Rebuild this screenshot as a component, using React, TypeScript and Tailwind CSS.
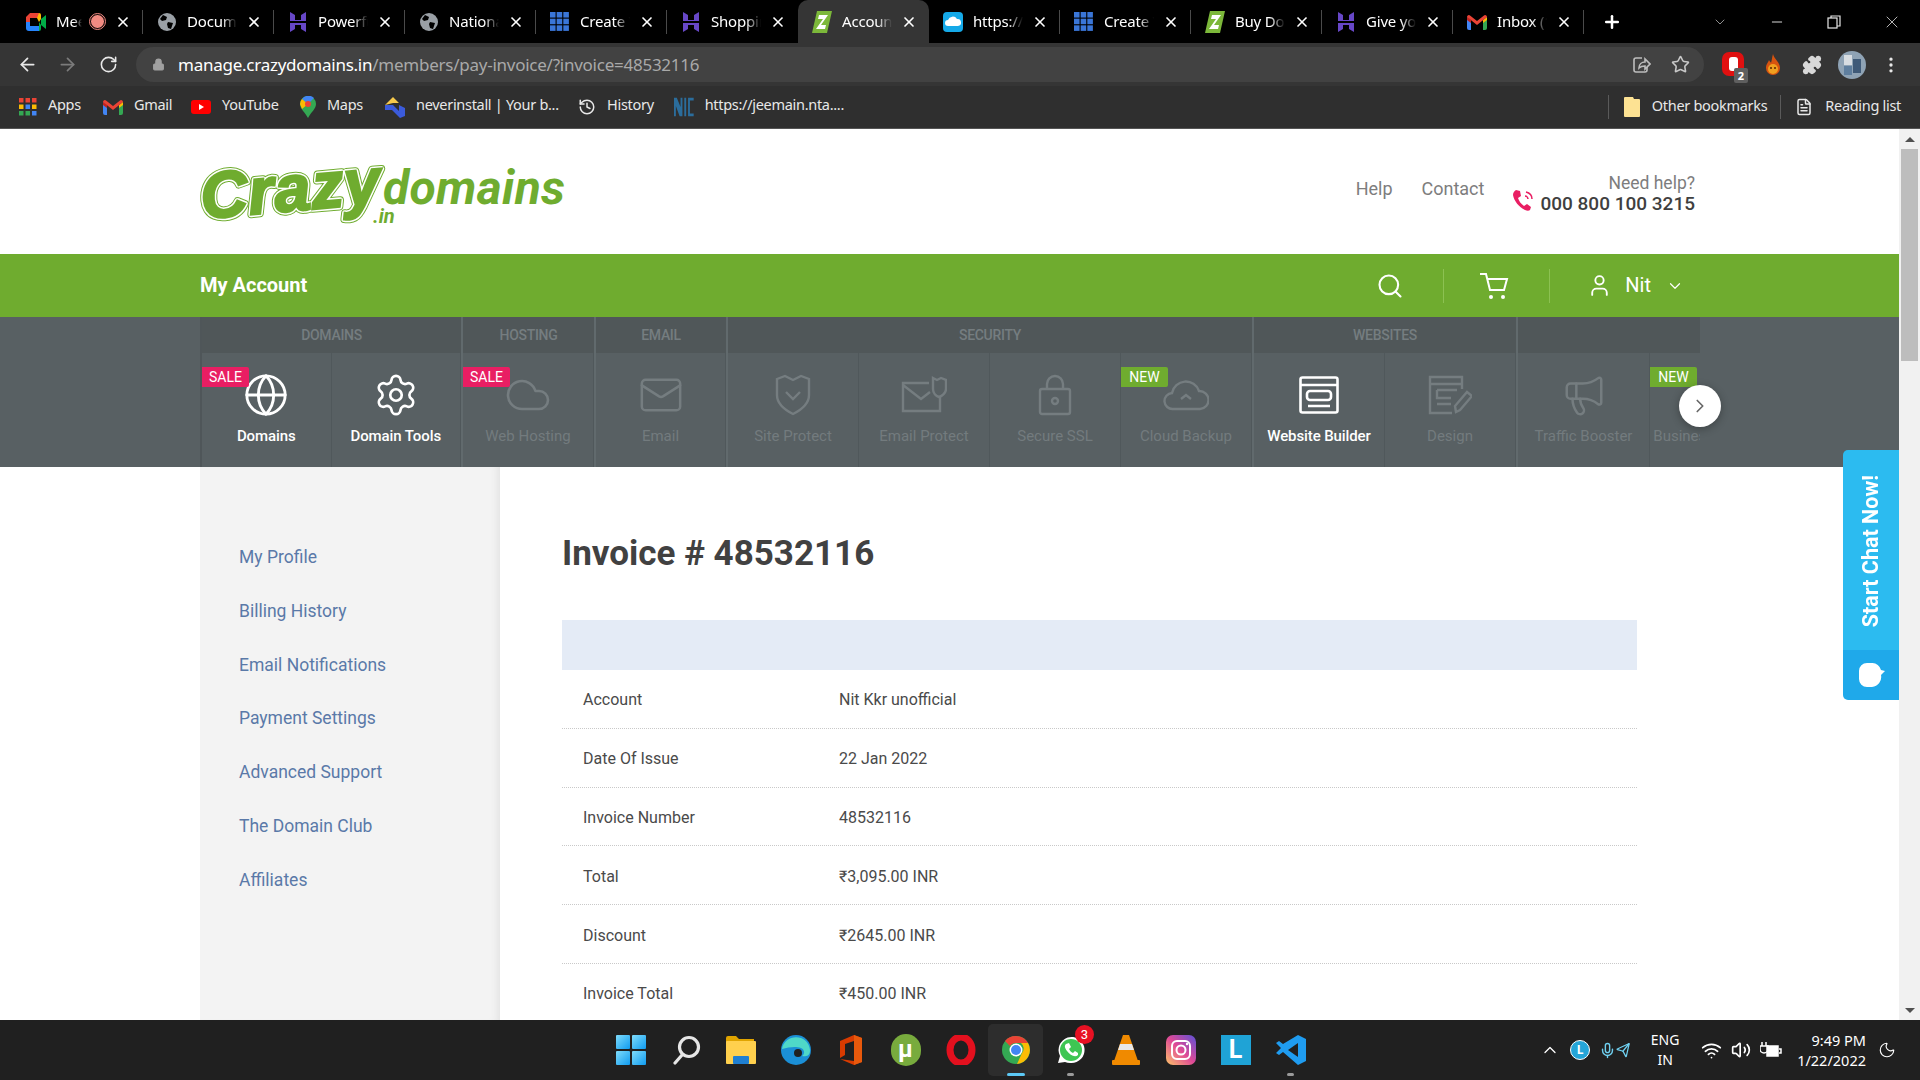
import React from 'react';
import {
  ArrowLeft, ArrowRight, RotateCw, Lock, Star, Puzzle, MoreVertical, X, Plus, ChevronDown, ChevronRight, ChevronUp,
  Minus, Search, User, Globe, Settings, Cloud, Mail, Megaphone, Wifi, Volume2, Moon, History, Mic, Send, FileText,
} from 'lucide-react';

const chromeFont = "font-['Noto_Sans','Open_Sans',sans-serif]";

const GlobeFav = () => (
  <svg width="20" height="20" viewBox="0 0 20 20">
    <circle cx="10" cy="10" r="9" fill="#9aa0a6" />
    <path d="M6 3l4 2-1 3-4 1-2-2zM11 10l5 1-2 6-3-1-1-4z" fill="#000" />
  </svg>
);
const HostFav = () => (
  <svg width="20" height="22" viewBox="0 0 20 22" fill="#6747c7">
    <path d="M2 1l5 3v5l6 0V4l5-3v9H2zM2 12h16v9l-5-3v-4H7v4l-5 3z" />
  </svg>
);
const GridFav = () => (
  <svg width="20" height="20" viewBox="0 0 18 18" fill="#3a76d8">
    {[0, 6, 12].map((x) => [0, 6, 12].map((y) => <rect key={`${x}${y}`} x={x} y={y} width="5" height="5" />))}
  </svg>
);
const CrazyFav = () => (
  <svg width="20" height="24" viewBox="0 0 20 24">
    <path d="M5 1h15l-5 22H0z" fill="#7cb83a" />
    <path d="M7 5h9l-7 10h5l-1 4H4l7-10H6z" fill="#fff" />
  </svg>
);
const CloudFav = () => (
  <svg width="20" height="20" viewBox="0 0 20 20">
    <rect width="20" height="20" rx="4" fill="#15a9e8" />
    <path d="M5 14a3 3 0 010-6 5 5 0 019-1 3.5 3.5 0 011 7z" fill="#fff" />
  </svg>
);
const GmailFav = () => (
  <svg width="20" height="16" viewBox="0 0 20 16">
    <path d="M0 3v11a2 2 0 002 2h2V7z" fill="#4285f4" />
    <path d="M20 3v11a2 2 0 01-2 2h-2V7z" fill="#34a853" />
    <path d="M0 3l4 3v3L0 6z" fill="#c5221f" />
    <path d="M16 6l4-3v3l-4 3z" fill="#fbbc04" />
    <path d="M0 3a2 2 0 013-1.6L10 7l7-5.6A2 2 0 0120 3l-10 8z" fill="#ea4335" />
  </svg>
);
const MeetFav = () => (
  <svg width="20" height="18" viewBox="0 0 20 18">
    <path d="M4 0h9v5H4v4H0V4z" fill="#ea4335" />
    <path d="M13 0a2 2 0 012 2v4l-2 3-2-4z" fill="#fbbc04" />
    <path d="M0 9h4v4h9v5H3a3 3 0 01-3-3z" fill="#2684fc" />
    <path d="M13 9l2 3v4a2 2 0 01-2 2z" fill="#00ac47" />
    <path d="M15 6l5-4v14l-5-4z" fill="#00ac47" />
  </svg>
);

const tabs = [
  { icon: <MeetFav />, title: 'Meet', rec: true },
  { icon: <GlobeFav />, title: 'Documents' },
  { icon: <HostFav />, title: 'Powerful' },
  { icon: <GlobeFav />, title: 'National' },
  { icon: <GridFav />, title: 'Create Your' },
  { icon: <HostFav />, title: 'Shopping' },
  { icon: <CrazyFav />, title: 'Account', active: true },
  { icon: <CloudFav />, title: 'https://app' },
  { icon: <GridFav />, title: 'Create Your' },
  { icon: <CrazyFav />, title: 'Buy Domain' },
  { icon: <HostFav />, title: 'Give your' },
  { icon: <GmailFav />, title: 'Inbox (1)' },
];

function TabStrip() {
  return (
    <div className="h-[43px] bg-black flex items-stretch pl-[12px] text-white">
      {tabs.map((t, i) => (
        <div
          key={i}
          className={`w-[131px] shrink-0 flex items-center pl-[14px] pr-[12px] text-[15px] tracking-[-0.2px] ${
            t.active ? 'bg-[#353535] rounded-t-[10px]' : ''
          }`}
        >
          <div className="w-[20px] flex justify-center shrink-0">{t.icon}</div>
          <div className={`ml-[10px] ${t.rec ? 'w-[26px]' : 'w-[50px]'} overflow-hidden whitespace-nowrap [mask-image:linear-gradient(to_right,black_70%,transparent)]`}>
            {t.title}
          </div>
          {t.rec && <div className="ml-[8px] w-[15px] h-[15px] rounded-full bg-[#f28b82] border border-black outline outline-[#f28b82]" />}
          <X size={16} strokeWidth={2.5} className="ml-auto shrink-0" />
          <div className={`w-px h-[24px] ml-[11px] -mr-[12px] shrink-0 ${t.active || i === 5 ? 'bg-transparent' : 'bg-[#4a4a4a]'}`} />
        </div>
      ))}
      <div className="ml-[18px] flex items-center"><Plus size={20} strokeWidth={3} /></div>
      <div className="ml-[90px] flex items-center text-[#d8d8d8]">
        <ChevronDown size={16} strokeWidth={1} />
        <Minus size={16} strokeWidth={1.5} className="ml-[41px]" />
        <svg width="14" height="14" viewBox="0 0 14 14" fill="none" stroke="#e8e8e8" strokeWidth="1.2" className="ml-[42px]">
          <rect x="1" y="3" width="9" height="10" />
          <path d="M4 3V1h9v10h-3" />
        </svg>
        <X size={20} strokeWidth={1} className="ml-[41px]" />
      </div>
    </div>
  );
}

function Toolbar() {
  return (
    <div className="h-[43px] bg-[#353535] flex items-center text-[#e8e8e8]">
      <ArrowLeft size={21} className="ml-[17px]" />
      <ArrowRight size={21} className="ml-[19px] text-[#7b7b7b]" />
      <RotateCw size={19} className="ml-[21px]" />
      <div className="ml-[18px] w-[1568px] h-[35px] rounded-full bg-[#424242] flex items-center pr-[14px]">
        <Lock size={13} fill="#a0a0a0" className="ml-[16px] text-[#a0a0a0]" />
        <div className="ml-[13px] text-[17px] text-white whitespace-nowrap tracking-[-0.25px]">
          manage.crazydomains.in<span className="text-[#a9a9a9]">/members/pay-invoice/?invoice=48532116</span>
        </div>
        <svg width="20" height="20" viewBox="0 0 20 20" fill="none" stroke="#bdbdbd" strokeWidth="1.6" className="ml-auto">
          <path d="M11 3H5a2 2 0 00-2 2v10a2 2 0 002 2h9a2 2 0 002-2v-3" />
          <path d="M8 13c0-4 3-6 6-6V4l5 5-5 5v-3c-3 0-4 0-6 2z" />
        </svg>
        <Star size={19} className="ml-[20px] text-[#c8c8c8]" />
      </div>
      <div className="ml-[18px] relative w-[22px] h-[26px]">
        <div className="w-[22px] h-[24px] rounded-[7px] bg-[#e01010] flex items-center justify-center">
          <div className="w-[9px] h-[14px] bg-white rounded-[3px]" />
        </div>
        <div className="absolute -right-[4px] -bottom-[5px] w-[14px] h-[15px] bg-[#5f5f5f] rounded-[2px] text-[11px] leading-[15px] text-center font-bold text-white">2</div>
      </div>
      <svg width="18" height="24" viewBox="0 0 18 24" className="ml-[20px]">
        <path d="M9 1c1 5 7 8 7 14a7 7 0 01-14 0c0-4 2-5 3-8 1 2 2 2 2 3 1-3 1-6 2-9z" fill="#d7530f" />
        <circle cx="9" cy="16" r="5" fill="#f0a020" />
        <circle cx="7" cy="15" r="1" fill="#5b2500" /><circle cx="11" cy="15" r="1" fill="#5b2500" />
      </svg>
      <Puzzle size={20} fill="#d8d8d8" className="ml-[20px] text-[#d8d8d8]" />
      <svg width="28" height="28" viewBox="0 0 28 28" className="ml-[16px]">
        <circle cx="14" cy="14" r="14" fill="#8fa3b5" />
        <rect x="6" y="4" width="8" height="10" fill="#d8dde2" />
        <rect x="15" y="8" width="8" height="14" fill="#3f5a78" />
        <rect x="6" y="15" width="8" height="9" fill="#5f7f9f" />
      </svg>
      <MoreVertical size={20} className="ml-[15px]" />
    </div>
  );
}

const AppsIcon = () => (
  <svg width="18" height="18" viewBox="0 0 18 18">
    {['#ea4335', '#ea4335', '#ea4335', '#fbbc04', '#4285f4', '#fbbc04', '#34a853', '#34a853', '#4285f4'].map((c, i) => (
      <rect key={i} x={(i % 3) * 6.5} y={Math.floor(i / 3) * 6.5} width="4.5" height="4.5" fill={c} />
    ))}
  </svg>
);

const bookmarks = [
  { w: 'w-[84px]', icon: <AppsIcon />, label: 'Apps', cls: 'ml-[19px]' },
  { w: 'w-[88px]', icon: <GmailFav />, label: 'Gmail', cls: '' },
  { w: 'w-[109px]', icon: (
    <svg width="20" height="14" viewBox="0 0 20 14"><rect width="20" height="14" rx="3" fill="#f00" /><path d="M8 4l5 3-5 3z" fill="#fff" /></svg>
  ), label: 'YouTube', cls: '' },
  { w: 'w-[85px]', icon: (
    <svg width="16" height="22" viewBox="0 0 16 22"><path d="M8 0a8 8 0 018 8c0 5-5 8-8 14C5 16 0 13 0 8a8 8 0 018-8z" fill="#34a853" /><path d="M2 3a8 8 0 0112-1L8 8z" fill="#4285f4" /><path d="M0 8a8 8 0 012-5l6 5-6 5z" fill="#fbbc04" /><circle cx="8" cy="8" r="3" fill="#ea4335" /></svg>
  ), label: 'Maps', cls: '' },
  { w: 'w-[193px]', icon: (
    <svg width="20" height="22" viewBox="0 0 20 22"><path d="M0 9l8-8 6 6H8z" fill="#f6c94c" /><path d="M0 9h8l6 6V9l6 3v8l-5 2-8-8H0z" fill="#3b5bdb" /></svg>
  ), label: 'neverinstall | Your b...', cls: '' },
  { w: 'w-[96px]', icon: <History size={18} />, label: 'History', cls: '' },
  { w: 'w-[170px]', icon: (
    <svg width="22" height="22" viewBox="0 0 21 20" fill="#2b6d9c"><path d="M0 0h3l4 10V0h2v20H6L2 9v11H0zM11 0h2v20h-2zM15 0h6v3h-4v14h4v3h-6z" /></svg>
  ), label: 'https://jeemain.nta....', cls: '' },
];

function BookmarksBar() {
  return (
    <div className="h-[43px] bg-[#2f2f2f] border-b border-[#555] flex items-center text-[#e8e8e8] text-[14.5px] tracking-[-0.3px] whitespace-nowrap">
      {bookmarks.map((b) => (
        <div key={b.label} className={`${b.w} ${b.cls} shrink-0 flex items-center gap-[11px]`}>
          {b.icon}
          <span className="-mt-[4px]">{b.label}</span>
        </div>
      ))}
      <div className="ml-auto flex items-center h-[24px]">
        <div className="border-l border-[#5a5a5a] h-full pl-[15px] pr-[12px] flex items-center">
          <svg width="16" height="20" viewBox="0 0 16 20"><path d="M0 1a1 1 0 011-1h8l1 2h5a1 1 0 011 1v16a1 1 0 01-1 1H1a1 1 0 01-1-1z" fill="#fde293" /></svg>
        </div>
        <span className="pr-[13px] leading-[20px] -mt-[4px]">Other bookmarks</span>
        <div className="border-l border-[#5a5a5a] h-full pl-[14px] pr-[12px] flex items-center">
          <FileText size={18} />
        </div>
        <span className="pr-[19px] leading-[20px] -mt-[4px]">Reading list</span>
      </div>
    </div>
  );
}

function Logo() {
  const green = '#6fac2f';
  const crazy = { x: 1, y: 54, fontSize: 65, textLength: 180, transform: 'rotate(-5 90 40)', fontFamily: 'Liberation Sans', fontWeight: 700, fontStyle: 'italic' } as const;
  return (
    <svg width="370" height="72" viewBox="0 0 370 72">
      <text {...crazy} fill={green} stroke={green} strokeWidth="7.5" strokeLinejoin="round">Crazy</text>
      <text {...crazy} fill="#fff" stroke="#fff" strokeWidth="5.5" strokeLinejoin="round">Crazy</text>
      <text {...crazy} fill={green} stroke={green} strokeWidth="2.5">Crazy</text>
      <text x="183" y="47" fontFamily="Roboto" fontWeight="700" fontStyle="italic" fontSize="48" textLength="182" fill={green}>domains</text>
      <text x="173" y="66" fontFamily="Roboto" fontWeight="700" fontStyle="italic" fontSize="20" fill={green}>.in</text>
    </svg>
  );
}

function SiteHeader() {
  return (
    <div className="h-[125px] bg-white flex items-center justify-between pl-[200px] pr-[204px]">
      <div className="pt-[2px]"><Logo /></div>
      <div className="flex items-center">
        <span className="text-[18px] text-[#7d7d7d] mr-[29px] -mt-[7px]">Help</span>
        <span className="text-[18px] text-[#7d7d7d] mr-[27px] -mt-[7px]">Contact</span>
        <svg width="24" height="24" viewBox="0 0 24 24" fill="none" className="mt-[16px] mr-[5px]">
          <path d="M5 2l4 1 1 5-3 2c1 3 3 6 6 8l3-2 4 3-1 3c-1 1-3 1-5 0C8 19 3 13 2 7c0-2 1-4 3-5z" fill="#e91e63" />
          <path d="M14 8c2 0 3 2 3 3M15 4c4 1 6 4 6 7" stroke="#e91e63" strokeWidth="1.5" />
        </svg>
        <div className="text-right pt-[4px]">
          <div className="text-[17.5px] leading-[20px] text-[#7d7d7d]">Need help?</div>
          <div className="text-[19px] leading-[22px] font-medium text-[#3f3f3f]">000 800 100 3215</div>
        </div>
      </div>
    </div>
  );
}

function AccountBar() {
  return (
    <div className="h-[63px] bg-[#6fac2f] flex items-center pl-[200px] text-white">
      <div className="text-[20px] font-bold -mt-[1px]">My Account</div>
      <Search size={28} strokeWidth={1.8} className="ml-[1069px]" />
      <div className="w-px h-[34px] bg-[#8cc152] ml-[39px]" />
      <svg width="32" height="28" viewBox="0 0 32 28" fill="none" stroke="#fff" strokeWidth="2" className="ml-[34px]">
        <path d="M2 2h6l4 16h14l3-11H10" />
        <circle cx="13" cy="25" r="2" fill="#fff" stroke="none" />
        <circle cx="25" cy="25" r="2" fill="#fff" stroke="none" />
      </svg>
      <div className="w-px h-[34px] bg-[#8cc152] ml-[39px]" />
      <User size={25} strokeWidth={1.8} className="ml-[37px]" />
      <div className="ml-[13px] text-[20px] -mt-[1px]">Nit</div>
      <ChevronDown size={18} strokeWidth={1.6} className="ml-[15px]" />
    </div>
  );
}

const dim = '#757d80';
const SiteShield = () => (
  <svg width="36" height="42" viewBox="0 0 36 42" fill="none" stroke={dim} strokeWidth="2.4">
    <path d="M2 5l8-3 8 4 8-4 8 3v16c0 9-8 15-16 19C10 36 2 30 2 21z" />
    <path d="M11 18l7 7 7-7" />
  </svg>
);
const EmailProtect = () => (
  <svg width="46" height="38" viewBox="0 0 46 38" fill="none" stroke={dim} strokeWidth="2.4">
    <path d="M28 7H2v28h37V20M2 9l18 14 9-7" />
    <path d="M32 2l4 2 4-2 5 2v9c0 4-4 7-7 8-3-1-6-4-6-8z" />
  </svg>
);
const SslLock = () => (
  <svg width="34" height="42" viewBox="0 0 34 42" fill="none" stroke={dim} strokeWidth="2.4">
    <rect x="2" y="15" width="30" height="25" rx="2" />
    <path d="M9 15V10a8 8 0 0116 0v5" />
    <circle cx="17" cy="27" r="3" />
  </svg>
);
const CloudUp = () => (
  <svg width="46" height="34" viewBox="0 0 46 34" fill="none" stroke={dim} strokeWidth="2.4">
    <path d="M10 31a8 8 0 01-1-16 14 14 0 0127-2 9 9 0 011 18z" />
    <path d="M18 21l5-4 5 4" />
  </svg>
);
const Builder = () => (
  <svg width="40" height="38" viewBox="0 0 40 38" fill="none" stroke="#fff" strokeWidth="2.6">
    <rect x="1.5" y="1.5" width="37" height="35" rx="2" />
    <path d="M2 9h36M9 30h22" />
    <rect x="8" y="15" width="24" height="9" rx="3" />
  </svg>
);
const Design = () => (
  <svg width="44" height="40" viewBox="0 0 44 40" fill="none" stroke={dim} strokeWidth="2.4">
    <path d="M34 14V2H2v36h22M2 9h32M9 15h20M9 15v8h14M9 29h14" />
    <path d="M28 37l-1-6 12-14 5 4-12 14z" />
  </svg>
);

const navGroups = [
  { label: 'DOMAINS', w: 'w-[261px]', items: [
    { name: 'Domains', on: true, badge: 'SALE', icon: <Globe size={46} strokeWidth={1.5} color="#fff" /> },
    { name: 'Domain Tools', on: true, icon: <Settings size={46} strokeWidth={1.4} color="#fff" /> },
  ] },
  { label: 'HOSTING', w: 'w-[133px]', items: [
    { name: 'Web Hosting', badge: 'SALE', icon: <Cloud size={48} strokeWidth={1.3} color={dim} /> },
  ] },
  { label: 'EMAIL', w: 'w-[132px]', items: [
    { name: 'Email', icon: <Mail size={46} strokeWidth={1.3} color={dim} /> },
  ] },
  { label: 'SECURITY', w: 'w-[526px]', items: [
    { name: 'Site Protect', icon: <SiteShield /> },
    { name: 'Email Protect', icon: <EmailProtect /> },
    { name: 'Secure SSL', icon: <SslLock /> },
    { name: 'Cloud Backup', badge: 'NEW', icon: <CloudUp /> },
  ] },
  { label: 'WEBSITES', w: 'w-[264px]', items: [
    { name: 'Website Builder', on: true, icon: <Builder /> },
    { name: 'Design', icon: <Design /> },
  ] },
];

type NavItemData = { name: string; on?: boolean; badge?: string; icon: React.ReactNode };

function NavCell({ item, className }: { item: NavItemData; className: string }) {
  return (
    <div className={`relative h-[114px] flex flex-col items-center border-r border-[#50585b] ${className}`}>
      {item.badge && (
        <div className={`absolute left-0 top-[14px] h-[20px] w-[47px] rounded-r-[2px] text-white text-[14px] leading-[20px] text-center ${item.badge === 'SALE' ? 'bg-[#e91e63]' : 'bg-[#6fac2f]'}`}>
          {item.badge}
        </div>
      )}
      <div className="h-[44px] mt-[20px] flex items-center justify-center">{item.icon}</div>
      <div className={`mt-[8px] text-[15px] whitespace-nowrap ${item.on ? 'text-white font-medium tracking-[-0.1px]' : 'text-[#737b7e]'}`}>{item.name}</div>
    </div>
  );
}

function ProductNav() {
  return (
    <div className="relative h-[150px] bg-[#586063] pl-[200px] flex">
      <div className="flex w-[1500px] overflow-hidden border-l-2 border-[#4f5659]">
        {navGroups.map((g) => (
          <div key={g.label} className={`${g.w} shrink-0 border-r-2 border-[#616a6d]`}>
            <div className="h-[36px] bg-[#505759] text-[14px] font-medium tracking-[-0.3px] text-[#757d80] flex items-center justify-center">{g.label}</div>
            <div className="flex">
              {g.items.map((it) => <NavCell key={it.name} item={it} className="flex-1 min-w-0" />)}
            </div>
          </div>
        ))}
        <div className="w-[182px] shrink-0 overflow-hidden">
          <div className="h-[36px] bg-[#505759]" />
          <div className="flex w-[300px]">
            <NavCell item={{ name: 'Traffic Booster', icon: <Megaphone size={46} strokeWidth={1.3} color={dim} /> }} className="w-[132px] shrink-0" />
            <NavCell item={{ name: 'Business Directory', badge: 'NEW', icon: null }} className="w-[132px] shrink-0" />
          </div>
        </div>
      </div>
      <div className="absolute left-[1679px] top-[68px] w-[42px] h-[42px] rounded-full bg-white shadow-[0_2px_8px_rgba(0,0,0,0.3)] flex items-center justify-center text-[#666]">
        <ChevronRight size={22} strokeWidth={1.8} />
      </div>
    </div>
  );
}

const sideLinks = ['My Profile', 'Billing History', 'Email Notifications', 'Payment Settings', 'Advanced Support', 'The Domain Club', 'Affiliates'];
const rows = [
  ['Account', 'Nit Kkr unofficial'],
  ['Date Of Issue', '22 Jan 2022'],
  ['Invoice Number', '48532116'],
  ['Total', '₹3,095.00 INR'],
  ['Discount', '₹2645.00 INR'],
  ['Invoice Total', '₹450.00 INR'],
];

function Content() {
  return (
    <div className="flex-1 min-h-0 flex pl-[200px] bg-white overflow-hidden">
      <div className="w-[300px] shrink-0 bg-[#f3f3f3] shadow-[inset_-8px_0_8px_-6px_rgba(0,0,0,0.08)] pt-[63px] pl-[39px]">
        {sideLinks.map((l) => (
          <div key={l} className="h-[53.9px] flex items-center text-[17.5px] text-[#5a79a8]">{l}</div>
        ))}
      </div>
      <div className="pl-[62px] w-[1137px] shrink-0">
        <h1 className="pt-[65px] text-[35px] leading-[44px] font-bold text-[#414141]">Invoice # 48532116</h1>
        <div className="mt-[44px] h-[50px] bg-[#e4ebf6]" />
        {rows.map(([k, v]) => (
          <div key={k} className="h-[58.8px] flex items-center pt-[3px] border-b border-dotted border-[#c9c9c9] text-[16px] text-[#4a4a4a]">
            <div className="w-[256px] pl-[21px] shrink-0">{k}</div>
            <div className="pl-[21px]">{v}</div>
          </div>
        ))}
      </div>
    </div>
  );
}

function ChatTab() {
  return (
    <div className="absolute right-0 top-[321px] w-[56px] h-[250px] rounded-l-[5px] overflow-hidden flex flex-col text-white">
      <div className="h-[200px] bg-[#2cbbf0] flex items-center justify-center pt-[2px]">
        <div className="[writing-mode:vertical-rl] rotate-180 text-[21.5px] font-bold whitespace-nowrap">Start Chat Now!</div>
      </div>
      <div className="h-[50px] bg-[#1fa9ea] flex items-center justify-center">
        <svg width="28" height="24" viewBox="0 0 28 24" fill="#fff">
          <path d="M10 0h5a9 9 0 019 7l4 1-4 4a10 10 0 01-9 12h-5a8 8 0 01-8-8V8a8 8 0 018-8z" />
        </svg>
      </div>
    </div>
  );
}

function Scrollbar() {
  return (
    <div className="w-[21px] shrink-0 bg-[#f1f1f1] flex flex-col items-center">
      <div className="h-[20px] flex items-center text-[#505050]">
        <div className="w-0 h-0 border-x-[5px] border-x-transparent border-b-[5px] border-b-[#505050]" />
      </div>
      <div className="w-[17px] h-[212px] bg-[#bdbdbd]" />
      <div className="mt-auto h-[20px] flex items-center">
        <div className="w-0 h-0 border-x-[5px] border-x-transparent border-t-[5px] border-t-[#505050]" />
      </div>
    </div>
  );
}

const taskIcons: React.ReactNode[] = [
  <svg width="30" height="30" viewBox="0 0 30 30"><defs><linearGradient id="win" x1="0" y1="0" x2="1" y2="1"><stop stopColor="#7fdcfb" /><stop offset="1" stopColor="#0f9bf0" /></linearGradient></defs><rect width="14" height="14" rx="1" fill="url(#win)" /><rect x="16" width="14" height="14" rx="1" fill="url(#win)" /><rect y="16" width="14" height="14" rx="1" fill="url(#win)" /><rect x="16" y="16" width="14" height="14" rx="1" fill="url(#win)" /></svg>,
  <svg width="30" height="30" viewBox="0 0 30 30" fill="none" stroke="#e6e6e6"><circle cx="18" cy="12" r="9.5" strokeWidth="3.2" /><path d="M11 20l-7 8" strokeWidth="3.2" strokeLinecap="round" /></svg>,
  <svg width="30" height="28" viewBox="0 0 30 28"><path d="M0 2a2 2 0 012-2h8l3 3h15v6H0z" fill="#e0a400" /><rect y="5" width="30" height="23" rx="1" fill="#ffd04d" /><rect x="7" y="20" width="16" height="8" rx="1" fill="#1f7fd1" /></svg>,
  <svg width="30" height="30" viewBox="0 0 30 30"><circle cx="15" cy="15" r="15" fill="#1b8fd6" /><path d="M1 14C2 5 12 0 20 3c6 2 9 8 9 13 0 5-5 6-8 5 3-2 3-6-1-8-5-2-12-1-19 1z" fill="#4fd8c8" /><circle cx="17" cy="18" r="4" fill="#202020" /></svg>,
  <svg width="26" height="30" viewBox="0 0 26 30"><path d="M2 6l14-6 8 3v24l-8 3-14-6 14 2V6L7 9v11l-5 3z" fill="#d83b01" /><path d="M16 0l8 3v24l-8 3z" fill="#e8590c" /></svg>,
  <div className="w-[30px] h-[32px] rounded-full bg-[#78ab3d] text-white text-[24px] leading-[30px] text-center font-bold">µ</div>,
  <svg width="30" height="30" viewBox="0 0 30 30"><ellipse cx="15" cy="15" rx="11" ry="13" fill="none" stroke="#e3101e" strokeWidth="7" /></svg>,
  <svg width="30" height="30" viewBox="0 0 30 30"><circle cx="15" cy="15" r="14" fill="#34a853" /><path d="M15 1a14 14 0 0112 7H15a7 7 0 00-6 3L4 6a14 14 0 0111-5z" fill="#ea4335" /><path d="M27 8a14 14 0 01-11 21l5-11a7 7 0 00-1-10z" fill="#fbbc04" /><circle cx="15" cy="15" r="6.5" fill="#fff" /><circle cx="15" cy="15" r="5" fill="#4285f4" /></svg>,
  <svg width="30" height="30" viewBox="0 0 30 30"><path d="M2 28l2-7A13 13 0 1115 28a13 13 0 01-6-1z" fill="#fff" /><circle cx="15" cy="15" r="11" fill="#3ec653" /><path d="M10 9l3-1 2 4-2 2c1 2 2 3 4 4l2-2 3 2v2c-3 3-8 0-11-4-2-3-3-5-1-7z" fill="#fff" /></svg>,
  <svg width="28" height="30" viewBox="0 0 28 30"><path d="M11 0h6l9 26H2z" fill="#f08a00" /><path d="M8 9h12l2 6H6z" fill="#e8e8e8" /><rect y="25" width="28" height="5" rx="1" fill="#f08a00" /></svg>,
  <svg width="30" height="30" viewBox="0 0 30 30" fill="none"><defs><linearGradient id="ig" x1="0" y1="1" x2="1" y2="0"><stop stopColor="#fdc468" /><stop offset="0.5" stopColor="#df4996" /><stop offset="1" stopColor="#5b51d8" /></linearGradient></defs><rect width="30" height="30" rx="7" fill="url(#ig)" /><rect x="6" y="6" width="18" height="18" rx="5" stroke="#fff" strokeWidth="2" /><circle cx="15" cy="15" r="4.5" stroke="#fff" strokeWidth="2" /><circle cx="21" cy="9" r="1.2" fill="#fff" /></svg>,
  <div className="w-[30px] h-[30px] bg-[#1fa3d6] text-white text-[25px] leading-[30px] text-center font-bold">L</div>,
  <svg width="30" height="30" viewBox="0 0 30 30"><path d="M22 0l8 4v22l-8 4L7 17l-4 3-3-2 5-5-5-5 3-2 4 3z" fill="#1f9cf0" /><path d="M22 8L12 15l10 7z" fill="#202020" /></svg>,
];

function Taskbar() {
  return (
    <div className="h-[60px] bg-[#202020] relative flex items-center text-white">
      <div className="ml-[603px] flex">
        {taskIcons.map((ic, i) => (
          <div key={i} className={`relative w-[55px] h-[52px] flex items-center justify-center rounded-[5px] ${i === 7 ? 'bg-[#2d2d2d]' : ''}`}>
            {ic}
            {i === 7 && <div className="absolute bottom-0 w-[18px] h-[3px] rounded bg-[#5cc8f5]" />}
            {i === 8 && (
              <>
                <div className="absolute right-[4px] top-[1px] w-[19px] h-[19px] rounded-full bg-[#e81123] text-[13px] leading-[19px] text-center">3</div>
                <div className="absolute bottom-0 w-[7px] h-[3px] rounded bg-[#9a9a9a]" />
              </>
            )}
            {i === 12 && <div className="absolute bottom-0 w-[7px] h-[3px] rounded bg-[#9a9a9a]" />}
          </div>
        ))}
      </div>
      <div className={`ml-auto pr-[24px] flex items-center ${chromeFont}`}>
        <ChevronUp size={20} strokeWidth={1.5} />
        <div className="ml-[10px] w-[20px] h-[20px] rounded-full bg-[#25a5d8] border border-white text-[12px] leading-[18px] text-center font-bold">L</div>
        <Mic size={17} className="ml-[9px] text-[#6fd0f0]" />
        <Send size={15} className="-rotate-6 text-[#6fd0f0]" />
        <div className="ml-[14px] w-[40px] text-center text-[14px] leading-[20px]">ENG<br />IN</div>
        <Wifi size={21} className="ml-[16px]" />
        <Volume2 size={20} className="ml-[9px]" />
        <svg width="22" height="18" viewBox="0 0 22 18" fill="none" stroke="#fff" strokeWidth="1.5" className="ml-[9px]">
          <rect x="7" y="5" width="11" height="10" fill="#fff" />
          <path d="M19 8h2v4h-2M2 1v4M6 1v4M0 5h8v3a4 4 0 01-8 0z" />
        </svg>
        <div className="ml-[15px] text-right text-[14.5px] leading-[20px]">9:49 PM<br />1/22/2022</div>
        <Moon size={18} strokeWidth={1.5} className="ml-[12px]" />
      </div>
    </div>
  );
}

export default function App() {
  return (
    <div className="w-[1920px] h-[1080px] overflow-hidden flex flex-col font-['Roboto',sans-serif]">
      <div className={chromeFont}>
        <TabStrip />
        <Toolbar />
        <BookmarksBar />
      </div>
      <div className="flex-1 min-h-0 flex">
        <div className="relative flex-1 min-w-0 flex flex-col">
          <SiteHeader />
          <AccountBar />
          <ProductNav />
          <Content />
          <ChatTab />
        </div>
        <Scrollbar />
      </div>
      <Taskbar />
    </div>
  );
}
